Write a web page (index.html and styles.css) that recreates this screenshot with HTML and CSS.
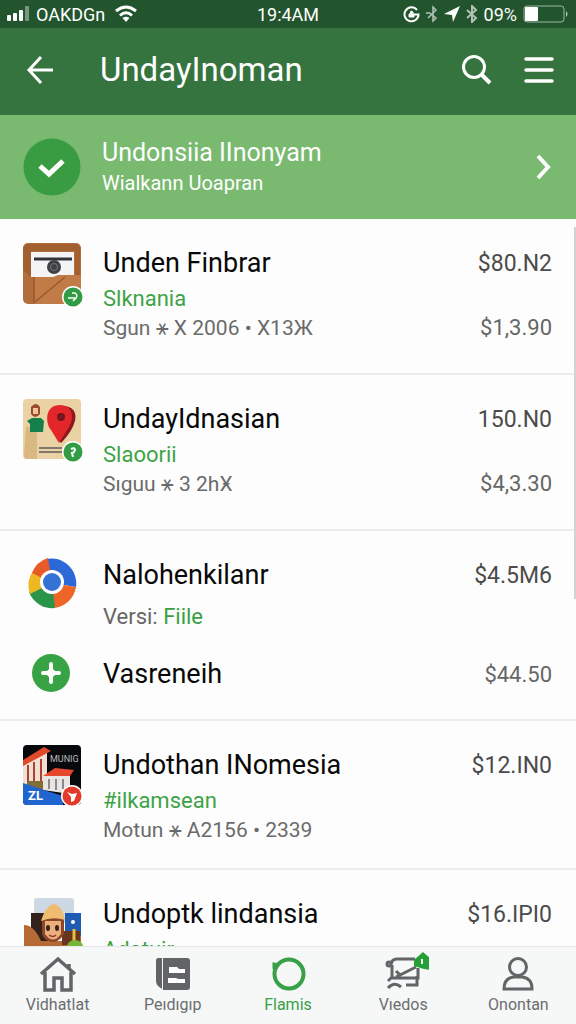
FILE: index.html
```html
<!DOCTYPE html>
<html lang="id">
<head>
    <meta charset="UTF-8">
    <meta name="viewport" content="width=device-width, initial-scale=1.0">
    <title>UndayInoman</title>
    <link rel="stylesheet" href="styles.css">
</head>
<body>
    <div class="status-bar">
        <div class="status-left">
            <svg width="23" height="16" viewBox="0 0 23 16" fill="#fff">
                <rect x="0" y="9" width="4" height="6" rx="1"/>
                <rect x="6" y="7" width="4" height="8" rx="1"/>
                <rect x="12" y="4" width="4" height="11" rx="1"/>
                <rect x="18" y="0" width="4" height="15" rx="1" opacity=".4"/>
            </svg>
            <span>OAKDGn</span>
            <svg class="wifi" width="22" height="18" viewBox="0 0 22 18" fill="none" stroke="#fff" stroke-width="3">
                <path d="M1 6Q11-2 21 6"/>
                <path d="M5 10.500Q11 5 17 10.500"/>
                <path d="M7.500 13Q11 10.500 14.500 13L11 17z" fill="#fff" stroke="none"/>
            </svg>
        </div>
        <span>19:4AM</span>
        <div class="status-right">
            <svg width="17" height="17" viewBox="0 0 17 17" fill="none" stroke="#fff" stroke-width="2">
                <path d="M14 4A7 7 0 1 0 15.500 8.500H11"/>
                <path d="M6 8h5v3H6zM7 8l1-3 2 1v2" fill="#fff" stroke-width="1"/>
            </svg>
            <svg class="faint" width="12" height="18" viewBox="0 0 12 18" fill="none" stroke="#fff" stroke-width="1.500">
                <path d="M0 8h4M2 13l8-8-3-3v14l3-3-6-5"/>
            </svg>
            <svg width="16" height="17" viewBox="0 0 16 17" fill="#fff">
                <path d="M16 0L9 16 8 9 0 8z"/>
            </svg>
            <svg class="faint" width="12" height="18" viewBox="0 0 12 18" fill="none" stroke="#fff" stroke-width="2">
                <path d="M1 5l9 8-4 4V1l4 4-9 8"/>
            </svg>
            <span>09%</span>
            <svg width="46" height="18" viewBox="0 0 46 18">
                <rect x="1" y="1" width="40" height="16" rx="3" fill="none" stroke="#9ab8a1"/>
                <rect x="2" y="2" width="13" height="14" rx="1" fill="#fff"/>
                <path d="M43 6q3 3 0 6z" fill="#b6cbb9"/>
            </svg>
        </div>
    </div>

    <header class="header">
        <button class="icon-button" aria-label="Back">
            <svg width="28" height="30" viewBox="0 0 28 30" fill="none" stroke="#fff" stroke-width="3">
                <path d="M15 2L3 15l12 13M3 15h24"/>
            </svg>
        </button>
        <h1>UndayInoman</h1>
        <button class="icon-button" aria-label="Search">
            <svg width="30" height="30" viewBox="0 0 30 30" fill="none" stroke="#fff" stroke-width="3">
                <circle cx="12" cy="12" r="10.500"/>
                <path d="M19 19l9 9" stroke-width="4"/>
            </svg>
        </button>
        <button class="icon-button" aria-label="Menu">
            <svg width="30" height="28" viewBox="0 0 30 28" stroke="#fff" stroke-width="3.500" stroke-linecap="round">
                <path d="M2 3h26M2 14h26M2 25h26"/>
            </svg>
        </button>
    </header>

    <a href="#" class="banner">
        <svg width="58" height="58" viewBox="0 0 58 58">
            <circle cx="29" cy="29" r="28.500" fill="#3a9c42"/>
            <path d="M17 28l9 8 14-13" fill="none" stroke="#fff" stroke-width="5"/>
        </svg>
        <span class="banner-text">
            <strong>Undonsiia IInonyam</strong>
            <span>Wialkann Uoapran</span>
        </span>
        <svg width="16" height="26" viewBox="0 0 16 26" fill="none" stroke="#fff" stroke-width="4">
            <path d="M2 2l10 11L2 24"/>
        </svg>
    </a>

    <main class="list">
        <section class="item">
            <div class="thumb">
                <svg width="61" height="66" viewBox="0 0 61 66">
                    <rect y="0" width="58" height="61" rx="5" fill="#b36d3c"/>
                    <path d="M3 1h52l2 4v27h-5V8H8v26L0 27V5z" fill="#a25f30"/>
                    <rect x="8" y="9" width="43" height="25" fill="#f4f4f4"/>
                    <path d="M11 16h38" stroke="#30343a" stroke-width="3"/>
                    <circle cx="31" cy="24" r="7" fill="#3f4144"/>
                    <circle cx="31" cy="24" r="3.500" fill="none" stroke="#777"/>
                    <path d="M11 34h19l5-2h23v24q0 5-5 5H12z" fill="#c17b47"/>
                    <path d="M12 59L42 34M11 34v26" stroke="#985a2e" stroke-width="1.500"/>
                    <circle cx="50" cy="54" r="11" fill="#fff"/>
                    <circle cx="50" cy="54" r="9.500" fill="#319c43"/>
                    <path d="M45 55h7M49 50h3q3 2 1 5l-3 3" fill="none" stroke="#fff" stroke-width="1.500"/>
                </svg>
            </div>
            <div class="details">
                <div class="line"><h2>Unden Finbrar</h2><span class="price">$80.N2</span></div>
                <p class="seller">Slknania</p>
                <div class="line meta"><span>Sgun ⚹ X 2006 • X13Ж</span><span class="price-small">$1,3.90</span></div>
            </div>
        </section>

        <section class="item">
            <div class="thumb">
                <svg width="61" height="66" viewBox="0 0 61 66">
                    <rect width="58" height="60" rx="4" fill="#ead2a5"/>
                    <path d="M3 27l11 5v28H4q-3 0-3-3z" fill="#d9b981"/>
                    <path d="M4 22l5-3h9l3 3-1 11H7v-8z" fill="#16804b"/>
                    <path d="M8 8q5-6 9 0v7q-5 6-9 0z" fill="#9b4b2a"/>
                    <path d="M10 9h5v6h-5z" fill="#f2c29c"/>
                    <path d="M16 49h23M16 53h24" stroke="#81786e" stroke-width="2"/>
                    <path d="M41 7c19 2 12 22-3 37-10-15-24-34 3-37z" fill="#8e1820"/>
                    <path d="M37 6c-15 0-15 17-9 25l8 13 10-16c6-10 3-22-9-22z" fill="#e32629"/>
                    <circle cx="38" cy="18" r="4" fill="#76151c"/>
                    <circle cx="50" cy="53" r="11" fill="#fff"/>
                    <circle cx="50" cy="53" r="9.500" fill="#319c43"/>
                    <path d="M48 50q4-2 4 1-1 3-3 3l1 4" fill="none" stroke="#fff" stroke-width="2"/>
                </svg>
            </div>
            <div class="details">
                <div class="line"><h2>UndayIdnasian</h2><span class="price">150.N0</span></div>
                <p class="seller">Slaoorii</p>
                <div class="line meta"><span>Sıguu ⚹ 3 2hӾ</span><span class="price-small">$4,3.30</span></div>
            </div>
        </section>

        <section class="item item-double">
            <div class="thumb">
                <svg width="60" height="54" viewBox="0 0 60 54">
                    <g transform="translate(1 2)">
                        <path d="M28 26L22 2A25 25 0 0 1 52 30z" fill="#2d68d8"/>
                        <path d="M28 26l24 4A25 25 0 0 1 30 51z" fill="#ee6528"/>
                        <path d="M28 26l3 25A25 25 0 0 1 5 35z" fill="#2a9448"/>
                        <path d="M28 26L6 37A25 25 0 0 1 9 14z" fill="#edb821"/>
                        <path d="M28 26L8 16A25 25 0 0 1 24 1z" fill="#e85b27"/>
                        <circle cx="28" cy="25" r="12" fill="#fff"/>
                        <circle cx="28" cy="25" r="9" fill="#3472d6"/>
                    </g>
                </svg>
            </div>
            <div class="details">
                <div class="line"><h2>Nalohenkilanr</h2><span class="price">$4.5M6</span></div>
                <p class="version">Versi: <span>Fiile</span></p>
            </div>
            <div class="thumb thumb-plus">
                <svg width="60" height="40" viewBox="0 0 60 40">
                    <circle cx="28" cy="19" r="19" fill="#38a345"/>
                    <path d="M28 10v18M20 19h16" stroke="#fff" stroke-width="4" stroke-linecap="round"/>
                    <path d="M28 13l6 6-6 6-6-6z" fill="#fff"/>
                </svg>
            </div>
            <div class="details">
                <div class="line"><h2>Vasreneih</h2><span class="price-small">$44.50</span></div>
            </div>
        </section>

        <section class="item item-short">
            <div class="thumb">
                <svg width="61" height="66" viewBox="0 0 61 66">
                    <rect width="58" height="60" rx="4" fill="#07090c"/>
                    <path d="M0 19L24 7v38L0 40z" fill="#f2ded2"/>
                    <path d="M0 15L21 2l7 4L0 21z" fill="#df4a2c"/>
                    <path d="M5 20v20M11 17v23M18 14v29" stroke="#a94432" stroke-width="2"/>
                    <path d="M20 31h27v18l-27-4z" fill="#e8e5e3"/>
                    <path d="M20 31l12-8 19 2-4 6z" fill="#e5482f"/>
                    <path d="M26 34v10M33 34v11M40 34v10" stroke="#8b898b" stroke-width="2"/>
                    <path d="M4 36h16v9L4 40z" fill="#806d37"/>
                    <path d="M0 38l24 8 16 5v9H4q-4 0-4-4z" fill="#2065cf"/>
                    <text x="27" y="17" class="thumb-label">MUNIG</text>
                    <text x="5" y="55" class="thumb-logo">ZL</text>
                    <circle cx="49" cy="51" r="11" fill="#fff"/>
                    <circle cx="49" cy="51" r="9.500" fill="#e43a2b"/>
                    <path d="M44 47l5 2 5-1-3 8-3 1v-5z" fill="#fff"/>
                </svg>
            </div>
            <div class="details">
                <div class="line"><h2>Undothan INomesia</h2><span class="price">$12.IN0</span></div>
                <p class="seller">#ilkamsean</p>
                <div class="line meta"><span>Motun ⚹ A2156 • 2339</span></div>
            </div>
        </section>

        <section class="item">
            <div class="thumb">
                <svg width="61" height="66" viewBox="0 0 61 66">
                    <rect x="11" y="4" width="40" height="25" rx="3" fill="#ccd8e3"/>
                    <path d="M8 19h17v30H8z" fill="#33211c"/>
                    <path d="M1 31q10 0 17 16h32l8-14v28H1z" fill="#b56a36"/>
                    <path d="M42 19h16v23H42z" fill="#205bb3"/>
                    <path d="M39 37h18v14H39z" fill="#69351f"/>
                    <path d="M19 24q11-11 22 0v16q-5 8-11 8-8 0-11-8z" fill="#8b4727"/>
                    <path d="M22 27h16v13q-8 11-16 0z" fill="#ecae7c"/>
                    <path d="M18 27q5-16 13-17 8 1 11 16-12-4-24 1z" fill="#efbd72"/>
                    <ellipse cx="25" cy="34" rx="2" ry="3" fill="#35211d"/>
                    <ellipse cx="34" cy="34" rx="2" ry="3" fill="#35211d"/>
                    <path d="M26 41q4 3 7 0" fill="none" stroke="#8e3c2d" stroke-width="1.500"/>
                    <path d="M51 35v16" stroke="#e6bd3c" stroke-width="3"/>
                    <circle cx="50" cy="28" r="2" fill="#fff"/>
                    <ellipse cx="52" cy="53" rx="8" ry="7" fill="#77b536"/>
                </svg>
            </div>
            <div class="details">
                <div class="line"><h2>Undoptk lindansia</h2><span class="price">$16.IPI0</span></div>
                <p class="seller">Adatuir</p>
            </div>
        </section>
        <div class="scroll-thumb"></div>
    </main>

    <nav class="bottom-nav">
        <a href="#">
            <svg width="40" height="36" viewBox="0 0 40 36" fill="none" stroke="#636467" stroke-width="3.500">
                <path d="M3 18L20 3l17 15M31 12V8"/>
                <path d="M7 16v18h9V22h8v12h9V16"/>
            </svg>
            <span>Vidhatlat</span>
        </a>
        <a href="#">
            <svg width="40" height="36" viewBox="0 0 40 36">
                <path d="M5 2h4v31l-4-3Q3 28 3 25V5q0-3 2-3z" fill="#636467"/>
                <path d="M10 2h24q3 0 3 3v26q0 3-3 3H10z" fill="#636467"/>
                <path d="M16 11h8l2 2h6v4H16zM15 22h8l2 1h7v4H15z" fill="#fff"/>
            </svg>
            <span>Peıdıgıp</span>
        </a>
        <a href="#" class="active">
            <svg width="40" height="36" viewBox="0 0 40 36" fill="none" stroke="#38a047" stroke-width="4">
                <circle cx="21" cy="18" r="14.500"/>
                <path d="M6 13V8l5 1" stroke-width="3"/>
            </svg>
            <span>Flamis</span>
        </a>
        <a href="#">
            <svg class="cart" width="52" height="40" viewBox="0 0 52 40" fill="none" stroke="#636467" stroke-width="3">
                <circle cx="12" cy="12" r="2"/>
                <path d="M14 12q1-5 6-5h18M15 13v12l-4 4M14 26h27V16M19 25l20-10M40 24v9H29M11 36q6-7 13-1M19 19l5 5"/>
                <path d="M37 8l9-8 7 6v12l-6-1-10-3z" fill="#25a037" stroke="none"/>
                <path d="M45 7v5" stroke="#fff" stroke-width="2"/>
            </svg>
            <span>Vıedos</span>
        </a>
        <a href="#">
            <svg width="40" height="36" viewBox="0 0 40 36" fill="none" stroke="#636467" stroke-width="3">
                <circle cx="20" cy="11" r="8.500"/>
                <path d="M6 33q0-11 10-12h8q10 1 10 12z"/>
            </svg>
            <span>Onontan</span>
        </a>
    </nav>
</body>
</html>
```
FILE: styles.css
```css
* {
    box-sizing: border-box;
}
body {
    font-family: Roboto, "DejaVu Sans", sans-serif;
    background-color: #fdfdfd;
    margin: 0;
    height: 100vh;
    display: flex;
    flex-direction: column;
}
h1, h2, p {
    margin: 0;
    font-weight: 400;
}
a {
    text-decoration: none;
}
svg {
    display: block;
    flex-shrink: 0;
}
.status-bar {
    display: grid;
    grid-template-columns: 1fr auto 1fr;
    align-items: center;
    height: 28px;
    padding: 0 7px;
    background-color: #22542d;
    color: #fff;
    font-size: 18px;
    flex-shrink: 0;
}
.status-left, .status-right {
    display: flex;
    align-items: center;
    gap: 6px;
}
.status-left .wifi {
    margin-left: 4px;
}
.status-right {
    justify-content: flex-end;
}
.faint {
    opacity: 0.65;
}
.header {
    display: flex;
    align-items: center;
    height: 87px;
    padding: 0 20px 4px 24px;
    background-color: #35743f;
    color: #fff;
    flex-shrink: 0;
}
.header h1 {
    flex-grow: 1;
    margin-left: 44px;
    font-size: 33px;
}
.icon-button {
    display: flex;
    padding: 2px;
    background: none;
    border: none;
    cursor: pointer;
}
.icon-button + .icon-button {
    margin-left: 28px;
}
.banner {
    display: flex;
    align-items: center;
    height: 104px;
    padding: 0 24px 0 23px;
    background-color: #79b970;
    color: #fff;
    flex-shrink: 0;
}
.banner-text {
    flex-grow: 1;
    display: flex;
    flex-direction: column;
    margin-left: 21px;
    font-size: 20px;
    line-height: 28px;
}
.banner-text strong {
    font-size: 25px;
    font-weight: 400;
    line-height: 32px;
}
.list {
    position: relative;
    flex: 1;
    min-height: 0;
    overflow-y: auto;
    scrollbar-width: none;
}
.item {
    display: grid;
    grid-template-columns: 60px 1fr;
    column-gap: 20px;
    padding: 24px 24px 32px 23px;
    border-bottom: 2px solid #ebecec;
}
.item-double, .item-short {
    padding-bottom: 25px;
}
.thumb-plus {
    margin-top: 15px;
}
.thumb-plus + .details {
    margin-top: 15px;
}
.thumb-label {
    font-size: 9px;
    fill: #bbb;
}
.thumb-logo {
    font-size: 13px;
    font-weight: 700;
    fill: #fff;
}
.line {
    display: flex;
    justify-content: space-between;
    align-items: center;
}
.item h2 {
    font-size: 27px;
    line-height: 40px;
    color: #080808;
}
.price {
    font-size: 23px;
    color: #4b4b4b;
}
.price-small {
    font-size: 22px;
    color: #666;
}
.seller {
    font-size: 22px;
    line-height: 32px;
    color: #3da346;
}
.meta {
    font-size: 21px;
    line-height: 26px;
    color: #6b6b6b;
}
.version {
    font-size: 22px;
    line-height: 44px;
    color: #666;
}
.version span {
    color: #38a043;
}
.scroll-thumb {
    position: absolute;
    top: 8px;
    right: 0;
    width: 2px;
    height: 372px;
    background-color: #d2d2d2;
}
.bottom-nav {
    display: grid;
    grid-template-columns: repeat(5, 1fr);
    height: 78px;
    padding-top: 9px;
    background-color: #f6f7f7;
    border-top: 1px solid #e6e6e6;
    flex-shrink: 0;
}
.bottom-nav a {
    display: flex;
    flex-direction: column;
    align-items: center;
    gap: 3px;
    font-size: 16px;
    line-height: 20px;
    color: #6c6d70;
}
.bottom-nav .active {
    color: #38a047;
}
.bottom-nav .cart {
    margin-top: -4px;
}
```
